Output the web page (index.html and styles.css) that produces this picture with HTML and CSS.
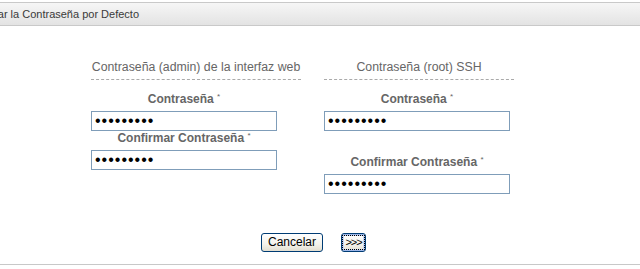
FILE: index.html
```html
<!DOCTYPE html>
<html lang="es">
<head>
    <meta charset="UTF-8">
    <title>Cambiar la Contraseña por Defecto</title>
    <link rel="stylesheet" href="styles.css">
</head>
<body>
    <div class="title-bar">
        <span class="title-text">Cambiar la Contraseña por Defecto</span>
    </div>

    <div class="pass-form">
        <div class="columns">
            <div class="column column-web">
                <h3 class="column-title">Contraseña (admin) de la interfaz web</h3>
                <div class="field">
                    <label for="webPass">Contraseña <span class="req">*</span></label>
                    <input type="password" id="webPass" value="123456789">
                </div>
                <div class="field">
                    <label for="webPass2">Confirmar Contraseña <span class="req">*</span></label>
                    <input type="password" id="webPass2" value="123456789">
                </div>
            </div>

            <div class="column column-ssh">
                <h3 class="column-title">Contraseña (root) SSH</h3>
                <div class="field">
                    <label for="sshPass">Contraseña <span class="req">*</span></label>
                    <input type="password" id="sshPass" value="123456789">
                </div>
                <div class="field field-spaced">
                    <label for="sshPass2">Confirmar Contraseña <span class="req">*</span></label>
                    <input type="password" id="sshPass2" value="123456789">
                </div>
            </div>
        </div>

        <div class="actions">
            <button type="button" class="btn">Cancelar</button>
            <button type="button" class="btn btn-next"><span>&gt;&gt;&gt;</span></button>
        </div>
    </div>

    <div class="bottom-line"></div>
</body>
</html>
```

FILE: styles.css
```css
body {
    margin: 0;
    background-color: #ffffff;
    font-family: 'Liberation Sans', Arial, sans-serif;
    overflow: hidden;
}

/* barra de titulo */
.title-bar {
    margin-top: 2px;
    height: 22px;
    border-top: 1px solid #c9c9c9;
    border-bottom: 1px solid #c9c9c9;
    background: linear-gradient(to bottom, #f6f6f6 0%, #e3e3e3 100%);
    overflow: hidden;
    white-space: nowrap;
}

.title-text {
    display: block;
    margin-left: -34px;
    font-size: 11px;
    line-height: 22px;
    color: #3a3a3a;
}

.pass-form {
    padding-top: 34px;
}

.columns {
    display: flex;
    gap: 23px;
    padding-left: 91px;
}

.column-web {
    width: 210px;
}

.column-ssh {
    width: 190px;
}

.column-title {
    margin: 0 0 12px 0;
    padding-bottom: 4px;
    border-bottom: 1px dashed #aaaaaa;
    font-size: 12.3px;
    line-height: 15px;
    font-weight: normal;
    color: #666;
    text-align: center;
    white-space: nowrap;
}

.field {
    width: 186px;
}

.field-spaced {
    margin-top: 24px;
}

label {
    display: block;
    height: 15px;
    padding-bottom: 4px;
    font-size: 12px;
    line-height: 15px;
    font-weight: bold;
    color: #666;
    text-align: center;
    white-space: nowrap;
}

.req {
    font-size: 8px;
    font-weight: normal;
    vertical-align: top;
    line-height: 10px;
}

input[type="password"] {
    display: block;
    width: 186px;
    height: 20px;
    margin: 0;
    padding: 0 3px;
    border: 1px solid #7f9db9;
    box-sizing: border-box;
    font-family: 'Liberation Sans', Arial, sans-serif;
    font-size: 16px;
    letter-spacing: 1px;
    color: #000;
    outline: none;
}

.actions {
    display: flex;
    justify-content: center;
    gap: 18px;
    margin-top: 39px;
    padding-right: 13px;
}

.btn {
    height: 19px;
    min-width: 62px;
    padding: 0 6px;
    border: 1px solid #003c74;
    border-radius: 3px;
    background: linear-gradient(to bottom, #ffffff 0%, #f3f2ec 60%, #e2ded0 100%);
    font-family: 'Liberation Sans', Arial, sans-serif;
    font-size: 12px;
    line-height: 15px;
    color: #000;
}

.btn-next {
    min-width: 25px;
    width: 25px;
    padding: 0 1px;
    box-shadow: inset 0 0 0 1px #9cb6e8, inset 0 0 0 2px #c6d6f4;
}

.btn-next span {
    display: block;
    outline: 1px dotted #000;
    font-size: 11px;
    line-height: 13px;
    overflow: hidden;
    letter-spacing: -1px;
}

.bottom-line {
    margin-top: 12px;
    height: 1px;
    background-color: #c8c8c8;
}
```
